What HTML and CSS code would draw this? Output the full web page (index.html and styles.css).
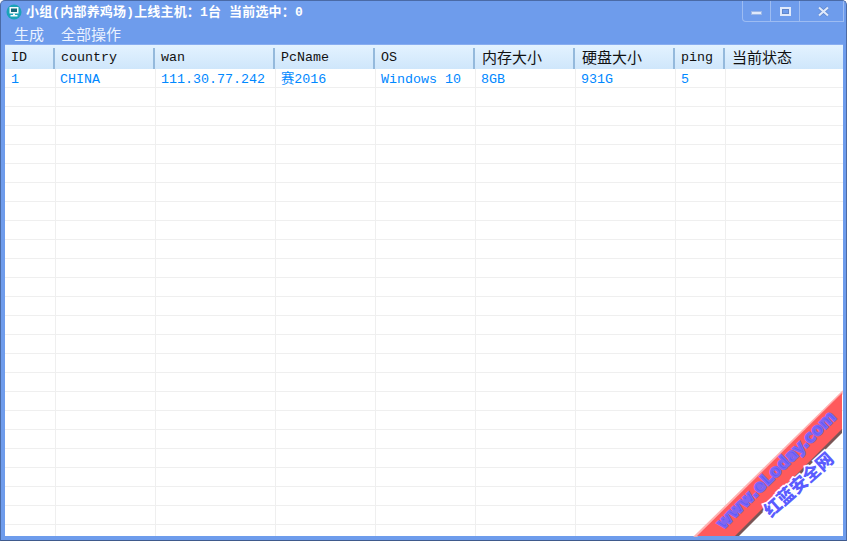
FILE: index.html
```html
<!DOCTYPE html>
<html lang="zh">
<head>
<meta charset="utf-8">
<title>小组(内部养鸡场)上线主机&#65306;1台 当前选中&#65306;0</title>
<link rel="stylesheet" href="styles.css">
</head>
<body>
<div class="window">
  <header class="titlebar">
    <svg class="app-icon" width="16" height="16" viewBox="0 0 16 16" aria-hidden="true">
      <circle cx="8" cy="8" r="7.5" fill="#1aa3b8"/>
      <rect x="3.5" y="3" width="9" height="6.5" fill="#f4fbfb"/>
      <rect x="5" y="4.5" width="6" height="3.5" fill="#17687a"/>
      <rect x="7" y="9.5" width="2" height="1.5" fill="#f4fbfb"/>
      <rect x="4.5" y="11" width="7" height="1.5" fill="#f4fbfb"/>
    </svg>
    <h1 class="title">小组(内部养鸡场)上线主机&#65306;1台 当前选中&#65306;0</h1>
    <div class="controls">
      <div class="ctl ctl-min"><span class="min"></span></div>
      <div class="ctl"><span class="max"></span></div>
      <div class="ctl ctl-close">
        <svg width="13" height="11" viewBox="0 0 13 11" aria-hidden="true"><path d="M2 1.5 L11 9.5 M11 1.5 L2 9.5" stroke="#5f86cc" stroke-width="3.6"/><path d="M2 1.5 L11 9.5 M11 1.5 L2 9.5" stroke="#dfe9fb" stroke-width="2.2"/></svg>
      </div>
    </div>
  </header>
  <nav class="menu"><span>生成</span><span>全部操作</span></nav>
  <main class="list">
    <div class="row head">
      <div>ID</div><div>country</div><div>wan</div><div>PcName</div><div>OS</div><div class="cjk">内存大小</div><div class="cjk">硬盘大小</div><div>ping</div><div class="cjk">当前状态</div>
    </div>
    <div class="row item">
      <div>1</div><div>CHINA</div><div>111.30.77.242</div><div>赛2016</div><div>Windows 10</div><div>8GB</div><div>931G</div><div>5</div><div></div>
    </div>
    <div class="row item"><div></div><div></div><div></div><div></div><div></div><div></div><div></div><div></div><div></div></div>
    <div class="row item"><div></div><div></div><div></div><div></div><div></div><div></div><div></div><div></div><div></div></div>
    <div class="row item"><div></div><div></div><div></div><div></div><div></div><div></div><div></div><div></div><div></div></div>
    <div class="row item"><div></div><div></div><div></div><div></div><div></div><div></div><div></div><div></div><div></div></div>
    <div class="row item"><div></div><div></div><div></div><div></div><div></div><div></div><div></div><div></div><div></div></div>
    <div class="row item"><div></div><div></div><div></div><div></div><div></div><div></div><div></div><div></div><div></div></div>
    <div class="row item"><div></div><div></div><div></div><div></div><div></div><div></div><div></div><div></div><div></div></div>
    <div class="row item"><div></div><div></div><div></div><div></div><div></div><div></div><div></div><div></div><div></div></div>
    <div class="row item"><div></div><div></div><div></div><div></div><div></div><div></div><div></div><div></div><div></div></div>
    <div class="row item"><div></div><div></div><div></div><div></div><div></div><div></div><div></div><div></div><div></div></div>
    <div class="row item"><div></div><div></div><div></div><div></div><div></div><div></div><div></div><div></div><div></div></div>
    <div class="row item"><div></div><div></div><div></div><div></div><div></div><div></div><div></div><div></div><div></div></div>
    <div class="row item"><div></div><div></div><div></div><div></div><div></div><div></div><div></div><div></div><div></div></div>
    <div class="row item"><div></div><div></div><div></div><div></div><div></div><div></div><div></div><div></div><div></div></div>
    <div class="row item"><div></div><div></div><div></div><div></div><div></div><div></div><div></div><div></div><div></div></div>
    <div class="row item"><div></div><div></div><div></div><div></div><div></div><div></div><div></div><div></div><div></div></div>
    <div class="row item"><div></div><div></div><div></div><div></div><div></div><div></div><div></div><div></div><div></div></div>
    <div class="row item"><div></div><div></div><div></div><div></div><div></div><div></div><div></div><div></div><div></div></div>
    <div class="row item"><div></div><div></div><div></div><div></div><div></div><div></div><div></div><div></div><div></div></div>
    <div class="row item"><div></div><div></div><div></div><div></div><div></div><div></div><div></div><div></div><div></div></div>
    <div class="row item"><div></div><div></div><div></div><div></div><div></div><div></div><div></div><div></div><div></div></div>
    <div class="row item"><div></div><div></div><div></div><div></div><div></div><div></div><div></div><div></div><div></div></div>
    <div class="row item"><div></div><div></div><div></div><div></div><div></div><div></div><div></div><div></div><div></div></div>
    <div class="row item"><div></div><div></div><div></div><div></div><div></div><div></div><div></div><div></div><div></div></div>
  </main>
  <svg class="ribbon" width="167" height="161" viewBox="680 380 167 161">
    <polygon class="band-glow" points="842,392 695,536 697,536 842,394"/>
    <polygon class="band" points="842,393 697,536 737,536 842,431"/>
    <polygon class="band-edge" points="842,429 735,536 739,536 842,433"/>
    <text class="ribbon-url" transform="translate(723 530) rotate(-44.5)" textLength="160" lengthAdjust="spacingAndGlyphs">www.eLoday.com</text>
    <text class="ribbon-name" transform="translate(771 518) rotate(-42)" textLength="86" lengthAdjust="spacingAndGlyphs">红蓝安全网</text>
  </svg>
</div>
</body>
</html>
```

FILE: styles.css
```css
* { box-sizing: border-box; }
html, body { margin: 0; padding: 0; height: 100%; background: #fff; overflow: hidden; }
.window {
  position: relative;
  width: 847px;
  height: 541px;
  display: flex;
  flex-direction: column;
  background: #6e9cec;
  border: 1px solid #4a6aa6;
  border-bottom-color: #3f5a8c;
  border-radius: 5px 5px 0 0;
  padding: 0 3px 4px 4px;
  overflow: hidden;
  font-family: "Liberation Mono", "Noto Sans CJK SC", monospace;
}
.titlebar {
  flex: none;
  height: 23px;
  display: flex;
  align-items: flex-start;
  color: #fff;
}
.app-icon { margin: 3px 0 0 1px; flex: none; }
.title {
  margin: 3px 0 0 4px;
  font-size: 13px;
  line-height: 17px;
  font-weight: 700;
  font-family: "Liberation Mono", "Noto Sans CJK SC", monospace;
  color: #fff;
  white-space: pre;
  letter-spacing: .17px;
}
.controls {
  margin-left: auto;
  display: flex;
  height: 21px;
  width: 102px;
  margin-right: -1px;
  border: 1px solid #9dbcf2;
  border-top: 0;
  border-radius: 0 0 0 4px;
}
.ctl {
  width: 29px;
  display: flex;
  align-items: center;
  justify-content: center;
  border-right: 1px solid #9dbcf2;
}
.ctl-min { width: 28px; }
.ctl-close { flex: 1; border-right: 0; padding-left: 3px; }
.min { width: 11px; height: 4px; margin-top: 4px; background: #dfe9fb; border: 1px solid #9cb7e6; }
.max { width: 11px; height: 9px; border: 2px solid #dfe9fb; outline: 1px solid #5f86cc; outline-offset: -3px; }
.menu {
  flex: none;
  height: 20px;
  display: flex;
  gap: 17px;
  padding-left: 9px;
  font-family: "Noto Sans CJK SC", sans-serif;
  font-size: 15px;
  line-height: 20px;
  color: #eaf2ff;
}
.list {
  flex: 1;
  min-height: 0;
  background: #fff;
  overflow: hidden;
  border-top: 1px solid #88adf0;
}
.row {
  display: grid;
  grid-template-columns: 51px 100px 120px 100px 100px 100px 100px 50px 1fr;
}
.head {
  height: 24px;
  background: linear-gradient(#e3f2ff, #cfe6fb);
  color: #111;
  font-size: 13.33px;
  line-height: 26px;
}
.head > div {
  padding-left: 5px;
  position: relative;
  white-space: nowrap;
}
.head > div:first-child { padding-left: 6px; }
.head > div + div::before {
  content: "";
  position: absolute;
  left: -3px;
  top: 3px;
  bottom: 2px;
  width: 2px;
  background: #94b9dc;
}
.head > .cjk {
  padding-left: 6px;
  font-family: "Noto Sans CJK SC", sans-serif;
  font-size: 15px;
  line-height: 23px;
}
.item {
  height: 19px;
  color: #0088ff;
  font-size: 13.33px;
  line-height: 21px;
  border-bottom: 1px solid #efefef;
}
.item > div {
  padding-left: 5px;
  border-right: 1px solid #efefef;
  white-space: nowrap;
}
.item > div:first-child { padding-left: 6px; }
.item > div:nth-child(2) { padding-left: 4px; }
.item > div:last-child { border-right: 0; }
.ribbon { position: absolute; right: -1px; bottom: -1px; pointer-events: none; }
.band { fill: #ff5a5c; }
.band-glow { fill: #ffc4c4; stroke: #ffb2b2; stroke-width: 1.5; }
.band-edge { fill: #7a5656; }
.ribbon-url {
  font-family: "DejaVu Sans", sans-serif;
  font-weight: 700;
  font-size: 17px;
  fill: #5a5cff;
  stroke: #7f66f2;
  stroke-width: 1.8;
}
.ribbon-name {
  font-family: "Noto Sans CJK SC", sans-serif;
  font-weight: 900;
  font-size: 17.5px;
  fill: #5a5cff;
  stroke: #fff;
  stroke-width: 3;
  paint-order: stroke;
}
```
